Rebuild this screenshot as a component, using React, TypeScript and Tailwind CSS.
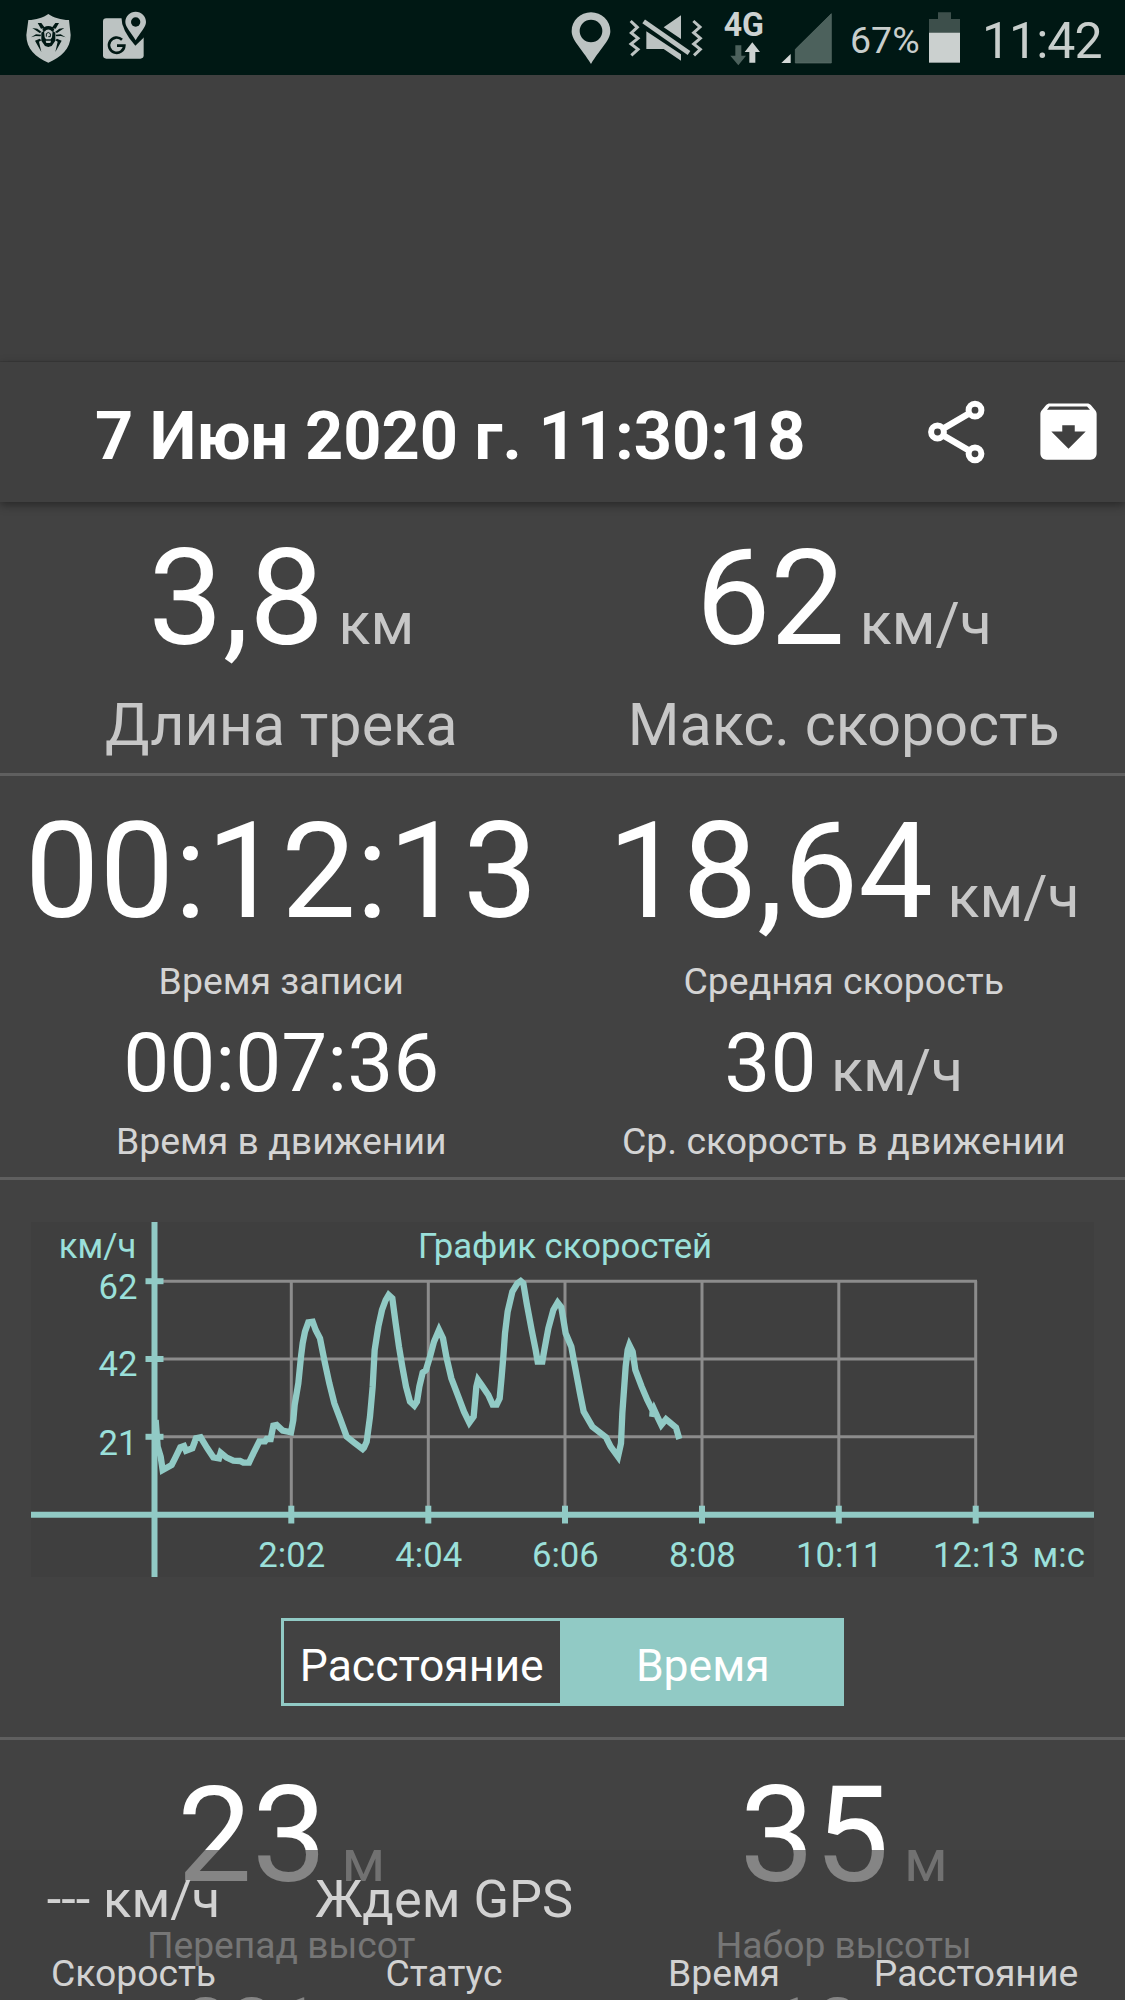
import type { ReactNode } from "react";

const X_TICKS = [
  { x: 291.3, label: "2:02" },
  { x: 428.3, label: "4:04" },
  { x: 565, label: "6:06" },
  { x: 702, label: "8:08" },
  { x: 838.8, label: "10:11" },
  { x: 975.7, label: "12:13" },
];

const Y_TICKS = [
  { y: 1281.2, label: "62", base: 1298.5 },
  { y: 1359, label: "42", base: 1376 },
  { y: 1436.8, label: "21", base: 1454.5 },
];

const SPEED_START =
  "467,660 473,740 482,770 488,810 515,795 525,775 541,742 552,738 558,752 577,745 588,715 602,712 622,745 640,772 657,775 662,758 680,773 700,782 720,783 730,788 747,788 760,760 778,724 795,724 800,717 812,717 820,677 830,675 848,692 873,697 880,660 884,615 895,550 903,470 908,430 915,395 925,367 938,365 947,390 960,415 975,490 988,550 1003,610 1020,655 1040,710 1063,728 1088,747";

const SPEED_END =
  "1092,743 1100,725 1110,650 1118,560 1124,450 1135,380 1146,330 1157,300 1166,285 1177,295 1187,370 1197,440 1207,500 1218,560 1230,605 1243,617 1251,605 1258,560 1268,518 1278,510 1290,470 1302,425 1317,390 1329,415 1340,475 1354,535 1373,585 1392,635 1408,668 1421,650 1429,560 1434,540 1446,557 1465,585 1478,614 1490,614 1499,595 1505,530 1510,470 1515,400 1523,335 1537,275 1552,250 1562,243 1570,250 1580,310 1595,390 1607,450 1613,485 1627,485 1633,450 1645,385 1660,330 1673,308 1684,322 1697,400 1714,440 1725,500 1740,580 1751,635 1777,680 1818,712 1832,740 1854,770 1863,730 1867,640 1877,500 1883,450 1888,435 1898,455 1906,510 1925,560 1942,600 1958,632 1957,650 1963,630 1972,650 1984,675 1998,658 2028,683 2038,717";

function StatusBar() {
  return (
    <div className="flex h-[75px] items-center bg-[#001814] text-[#c8cecc]">
      <svg className="ml-[23px] h-[75px] w-[51px]" viewBox="69 0 153 225">
        <path
          d="M145 42C160 53 183 60 207 60L212 105C212 147 183 172 145 188C107 172 79 147 79 105L85 60C108 60 130 53 145 42Z"
          fill="#bcc3c2"
        />
        <g fill="#001814">
          <path d="M127 90Q131 78 145 78Q159 78 163 90L157 95Q145 82 133 95Z" />
          <path d="M124 98L132 92L134 112L138 118H152L156 112L158 92L166 98V122L155 138L145 141L135 138L124 122Z" />
          <path d="M113 69L124 69L135 84L123 86Z M177 69L166 69L155 84L167 86Z" />
          <path d="M97 84L112 86L125 96L119 99Z M193 84L178 86L165 96L171 99Z" />
          <path d="M93 112L108 103L124 104L121 109L107 108Z M197 112L182 103L166 104L169 109L183 108Z" />
          <path d="M105 122L119 116L124 121L117 125L124 156Z M185 122L171 116L166 121L173 125L166 156Z" />
        </g>
        <path d="M139 110V101Q145 94 151 101V110H145" fill="none" stroke="#001814" strokeWidth="3" />
        <path d="M137 122H153L151 129H139Z" fill="#bcc3c2" />
      </svg>
      <svg className="ml-[26px] h-[75px] w-[50px]" viewBox="300 0 150 225">
        <rect x="309" y="55" width="122" height="121" rx="10" fill="#bcc3c2" />
        <path d="M364 50H440V104L406 137Q364 90 364 50Z" fill="#001814" />
        <path
          d="M407 35C390 35 376 48 376 66C376 82 394 98 407 121C420 98 438 82 438 66C438 48 424 35 407 35Z"
          fill="#bcc3c2"
        />
        <circle cx="407" cy="66" r="14" fill="#001814" />
        <path d="M366 119A23 23 0 1 0 373 137H351" fill="none" stroke="#001814" strokeWidth="8" />
      </svg>

      <svg className="ml-auto h-[75px] w-[42px]" viewBox="60 0 126 225">
        <path
          fillRule="evenodd"
          d="M123 37C91 37 65 62 65 94C65 121 94 145 123 192C152 145 181 121 181 94C181 62 155 37 123 37ZM123 59A34 34 0 1 1 123 127A34 34 0 1 1 123 59Z"
          fill="#bcc3c2"
        />
      </svg>
      <svg className="ml-4 h-[75px] w-[75px]" viewBox="234 0 225 225">
        <path d="M242 63L262 82L244 99L264 115L243 132L264 148L244 166" fill="none" stroke="#bcc3c2" strokeWidth="9" />
        <path d="M430 63L450 81L431 98L451 115L431 132L451 148L432 166" fill="none" stroke="#bcc3c2" strokeWidth="9" />
        <path d="M341 82L393 46V117Z M289 94V147H341L393 182V163Z" fill="#bcc3c2" />
        <path d="M281 64L417 159" stroke="#bcc3c2" strokeWidth="14" />
      </svg>
      <svg className="ml-[19px] h-[75px] w-11" viewBox="516 0 132 225">
        <text
          x="521"
          y="107"
          textLength="121"
          lengthAdjust="spacingAndGlyphs"
          className="font-[Roboto] text-[98px] font-bold"
          fill="#cdd2d1"
        >
          4G
        </text>
        <path d="M556 136H574V167H588L565 196L541 167H556Z" fill="#4c615c" />
        <path d="M607 127L630 156H616V188H598V156H584Z" fill="#cdd2d1" />
      </svg>
      <svg className="ml-[14px] h-[75px] w-[53px]" viewBox="690 0 159 225">
        <path d="M722 162V189H694Z" fill="#d5d9d8" />
        <path d="M844 41V189H736V148Z" fill="#4c615c" stroke="#5d716c" strokeWidth="2" />
      </svg>
      <span className="ml-[17px] w-[70px] pt-[5px] text-[37.5px] leading-[44px]">67%</span>
      <svg className="ml-[9px] h-[75px] w-[31px]" viewBox="297 0 93 225">
        <path d="M324 37H363V57H390V98H297V57H324Z" fill="#3d4f4b" />
        <rect x="297" y="98" width="93" height="90" fill="#cbd0cf" />
      </svg>
      <span className="mr-[22px] ml-[22px] w-[121px] pt-[6px] text-[50px] leading-[60px] tracking-[-1px]">11:42</span>
    </div>
  );
}

function TitleBar() {
  return (
    <header className="relative flex h-[140px] items-center bg-[#404040] shadow-[0_3px_9px_rgba(0,0,0,0.4)]">
      <h1 className="ml-[95px] pt-2 text-[66.7px] leading-[78px] font-bold whitespace-nowrap text-white">
        7 Июн 2020 г. 11:30:18
      </h1>
      <svg className="absolute top-[38px] left-[926px] h-16 w-[60px]" viewBox="926 400 60 64">
        <path d="M975 410L937.5 432L975 454" fill="none" stroke="#fff" strokeWidth="6.5" />
        <g fill="#404040" stroke="#fff" strokeWidth="6">
          <circle cx="975" cy="410.2" r="6.4" />
          <circle cx="937.5" cy="432" r="6.4" />
          <circle cx="975" cy="453.8" r="6.4" />
        </g>
      </svg>
      <svg className="absolute top-[32px] left-[1031px] size-[75px]" viewBox="0 0 24 24" fill="#fff">
        <path d="M20.54 5.23l-1.39-1.68C18.88 3.21 18.47 3 18 3H6c-.47 0-.88.21-1.16.55L3.46 5.23C3.17 5.57 3 6.02 3 6.5V19c0 1.1.9 2 2 2h14c1.1 0 2-.9 2-2V6.5c0-.48-.17-.93-.46-1.27zM12 17.5L6.5 12H10v-2h4v2h3.5L12 17.5zM5.12 5l.81-1h12l.94 1H5.12z" />
      </svg>
    </header>
  );
}

function Unit({ children }: { children: ReactNode }) {
  return <span className="text-[59px] leading-none text-[#c7c7c7]">&nbsp;{children}</span>;
}

function Big({ value, unit }: { value: string; unit?: string }) {
  return (
    <p className="text-[133px] leading-[156px] text-white">
      {value}
      {unit && <Unit>{unit}</Unit>}
    </p>
  );
}

function Medium({ value, unit }: { value: string; unit?: string }) {
  return (
    <p className="text-[82px] leading-[98px] text-white">
      {value}
      {unit && <Unit>{unit}</Unit>}
    </p>
  );
}

function SpeedChart() {
  return (
    <svg className="mx-auto block h-[355px] w-[1063px] bg-[#3f3f3f]" viewBox="31 1222 1063 355">
      <g stroke="#8c8c8c" strokeWidth="3">
        {Y_TICKS.map((t) => (
          <path key={t.label} d={`M154 ${t.y}H977`} />
        ))}
        {X_TICKS.map((t) => (
          <path key={t.label} d={`M${t.x} 1281V1512`} />
        ))}
      </g>
      <g stroke="#91cac5" strokeWidth="6">
        <path d="M154.5 1222V1577" />
        <path d="M31 1514.7H1094" />
        {Y_TICKS.map((t) => (
          <path key={t.label} d={`M145.5 ${t.y}H163.5`} />
        ))}
        {X_TICKS.map((t) => (
          <path key={t.label} d={`M${t.x} 1505.7V1523.5`} />
        ))}
      </g>
      <polyline
        points={`${SPEED_START} ${SPEED_END}`}
        transform="translate(0 1200) scale(0.33333)"
        fill="none"
        stroke="#91cac5"
        strokeWidth="19"
      />
      <g fill="#9be0da" className="font-[Roboto] text-[34.7px]">
        <text x="136.5" y="1257.5" textAnchor="end">
          км/ч
        </text>
        <text x="565" y="1257.5" textAnchor="middle">
          График скоростей
        </text>
        {Y_TICKS.map((t) => (
          <text key={t.label} x="137.5" y={t.base} textAnchor="end">
            {t.label}
          </text>
        ))}
        {X_TICKS.map((t) => (
          <text key={t.label} x={t.x + 0.4} y="1567" textAnchor="middle">
            {t.label}
          </text>
        ))}
        <text x="1032.5" y="1567">
          м:с
        </text>
      </g>
    </svg>
  );
}

function LiveBar() {
  return (
    <footer className="absolute inset-x-0 bottom-0 grid h-[150px] grid-cols-[267px_354px_206px_298px] content-start bg-[#404040]/64 pt-[19px] text-center text-[#d2d2d2]">
      <p className="h-[60px] text-[52.3px] leading-[60px] whitespace-nowrap">--- км/ч</p>
      <p className="text-[52.3px] leading-[60px]">Ждем GPS</p>
      <p />
      <p />
      <p className="mt-[22px] text-[37.3px] leading-[44px]">Скорость</p>
      <p className="mt-[22px] text-[37.3px] leading-[44px]">Статус</p>
      <p className="mt-[22px] text-[37.3px] leading-[44px]">Время</p>
      <p className="mt-[22px] text-[37.3px] leading-[44px]">Расстояние</p>
    </footer>
  );
}

export default function App() {
  return (
    <div className="relative h-[2000px] w-[1125px] overflow-hidden bg-[#424242] font-[Roboto,sans-serif]">
      <StatusBar />
      <div className="h-[287px] border-b border-[#3a3a3a] bg-[#404040]" />
      <TitleBar />

      <section className="grid h-[274px] grid-cols-2 border-b-3 border-[#5f5f5f] pt-[19px] text-center text-[#c7c7c7]">
        <div>
          <Big value="3,8" unit="км" />
          <p className="mt-[13px] text-[59.3px] leading-[69px]">Длина трека</p>
        </div>
        <div>
          <Big value="62" unit="км/ч" />
          <p className="mt-[13px] text-[59.3px] leading-[69px]">Макс. скорость</p>
        </div>
      </section>

      <section className="grid h-[404px] grid-cols-2 border-b-3 border-[#5f5f5f] pt-[18px] text-center text-[#d4d4d4]">
        <div>
          <Big value="00:12:13" />
          <p className="mt-[9px] text-[37.4px] leading-[44px]">Время записи</p>
          <div className="mt-[11px]">
            <Medium value="00:07:36" />
          </div>
          <p className="mt-[7px] text-[37.4px] leading-[44px]">Время в движении</p>
        </div>
        <div>
          <Big value="18,64" unit="км/ч" />
          <p className="mt-[9px] text-[37.4px] leading-[44px]">Средняя скорость</p>
          <div className="mt-[11px]">
            <Medium value="30" unit="км/ч" />
          </div>
          <p className="mt-[7px] text-[37.4px] leading-[44px]">Ср. скорость в движении</p>
        </div>
      </section>

      <section className="h-[560px] border-b-3 border-[#5f5f5f] pt-[42px]">
        <SpeedChart />
        <div className="mx-auto mt-[41px] grid h-[88px] w-[563px] grid-cols-2 border-3 border-[#91cac5] text-[44.5px] text-white">
          <button className="border-r-3 border-[#91cac5] pt-[8px]">Расстояние</button>
          <button className="bg-[#91cac5] pt-[8px] pl-[2px]">Время</button>
        </div>
      </section>

      <section className="grid grid-cols-2 pt-[18px] text-center text-[#d4d4d4]">
        <div>
          <Big value="23" unit="м" />
          <p className="mt-[9px] text-[37.2px] leading-[44px]">Перепад высот</p>
          <div className="mt-[12px]">
            <Medium value="221" unit="м" />
          </div>
        </div>
        <div>
          <Big value="35" unit="м" />
          <p className="mt-[9px] text-[37.2px] leading-[44px]">Набор высоты</p>
          <div className="mt-[12px]">
            <Medium value="10" unit="м" />
          </div>
        </div>
      </section>

      <LiveBar />
    </div>
  );
}
